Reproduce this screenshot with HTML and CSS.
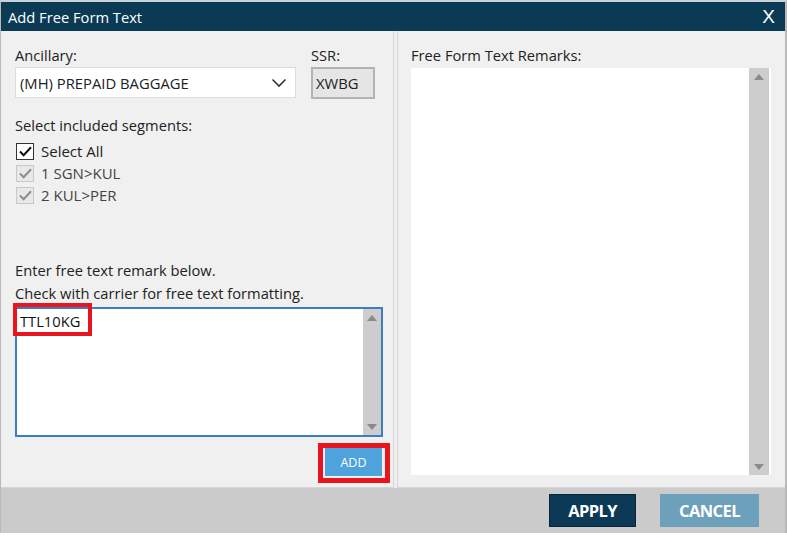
FILE: index.html
```html
<!DOCTYPE html>
<html lang="en">

<head>
  <meta charset="UTF-8">
  <meta name="viewport" content="width=device-width, initial-scale=1.0">
  <title>Add Free Form Text</title>
  <link rel="stylesheet" href="styles.css">
</head>

<body>
  <div id="dialog">
    <div class="titlebar">
      <span class="title">Add Free Form Text</span>
      <span class="close">X</span>
    </div>

    <div class="content">
      <div class="panel left">
        <div class="top-row">
          <div class="field ancillary">
            <label>Ancillary:</label>
            <div class="select">
              <span>(MH) PREPAID BAGGAGE</span>
              <svg width="16" height="10" viewBox="0 0 16 10"><path d="M1.5 1.5 L8 8 L14.5 1.5" fill="none" stroke="#333" stroke-width="1.6"/></svg>
            </div>
          </div>
          <div class="field ssr">
            <label>SSR:</label>
            <div class="ssr-box">XWBG</div>
          </div>
        </div>

        <p class="segments-title">Select included segments:</p>
        <ul class="segments">
          <li><span class="check"><svg width="13" height="11" viewBox="0 0 13 11"><path d="M1 5.5 L4.6 9.2 L12 1.2" fill="none" stroke="#111" stroke-width="2"/></svg></span>Select All</li>
          <li class="disabled"><span class="check"><svg width="13" height="11" viewBox="0 0 13 11"><path d="M1 5.5 L4.6 9.2 L12 1.2" fill="none" stroke="#8c8c8c" stroke-width="2"/></svg></span>1 SGN&gt;KUL</li>
          <li class="disabled"><span class="check"><svg width="13" height="11" viewBox="0 0 13 11"><path d="M1 5.5 L4.6 9.2 L12 1.2" fill="none" stroke="#8c8c8c" stroke-width="2"/></svg></span>2 KUL&gt;PER</li>
        </ul>

        <p class="hint">Enter free text remark below.</p>
        <p class="hint">Check with carrier for free text formatting.</p>

        <div class="remark-box">
          <div class="remark-text">TTL10KG</div>
          <div class="scrollbar">
            <span class="arrow up"></span>
            <span class="arrow down"></span>
          </div>
          <span class="mark mark-text"></span>
        </div>

        <div class="add-row">
          <div class="add-wrap">
            <button class="add">ADD</button>
          </div>
        </div>
      </div>

      <div class="panel right">
        <label>Free Form Text Remarks:</label>
        <div class="remarks-list">
          <div class="list-body"></div>
          <div class="scrollbar wide">
            <span class="arrow up"></span>
            <span class="arrow down"></span>
          </div>
        </div>
      </div>
    </div>

    <div class="footer">
      <button class="btn apply">APPLY</button>
      <button class="btn cancel">CANCEL</button>
    </div>
  </div>
  <div class="underlay"></div>
</body>

</html>
```

FILE: styles.css
```css
* {
  margin: 0;
  padding: 0;
  box-sizing: border-box;
}

body {
  background: #fff;
  font-family: "Open Sans", "Noto Sans", sans-serif;
  font-size: 14.7px;
  color: #222;
}

#dialog {
  width: 787px;
  height: 533px;
  display: flex;
  flex-direction: column;
  border-top: 2px solid #c9d2d8;
  border-left: 1px solid #b9b9b9;
  border-right: 2px solid #b9b9b9;
  background: #cbcbcb;
}

.titlebar {
  height: 29px;
  flex: none;
  background: #0b3a55;
  color: #fff;
  display: flex;
  align-items: center;
  justify-content: space-between;
  padding: 0 10px 0 7px;
}

.title {
  font-size: 14.7px;
}

.close {
  font-family: "Liberation Sans", sans-serif;
  font-size: 19px;
}

.content {
  height: 457px;
  flex: none;
  display: flex;
  gap: 3px;
  background: #f0f0f0;
}

.panel {
  background: #f0f0f0;
  border-bottom: 1px solid #d6d6d6;
}

.left {
  width: 393px;
  border-right: 1px solid #d6d6d6;
  padding: 15px 0 0 14px;
}

.right {
  flex: 1;
  border-left: 1px solid #d6d6d6;
  padding: 15px 11px 0 13px;
}

label {
  display: block;
  line-height: 18px;
  margin-bottom: 3px;
}

.right label {
  margin-bottom: 4px;
}

.top-row {
  display: flex;
  gap: 15px;
}

.select {
  width: 281px;
  height: 31px;
  background: #fff;
  border: 1px solid #dcdcdc;
  display: flex;
  align-items: center;
  justify-content: space-between;
  padding: 0 8px 0 4px;
  font-size: 14.8px;
}

.ssr-box {
  width: 64px;
  height: 32px;
  background: #e5e5e5;
  border: 2px solid #b3b3b3;
  display: flex;
  align-items: center;
  padding-left: 3px;
  font-size: 14.8px;
}

.segments-title {
  margin-top: 17px;
  line-height: 19px;
}

.segments {
  list-style: none;
  margin-top: 5px;
}

.segments li {
  height: 22px;
  display: flex;
  align-items: center;
  font-size: 15px;
}

.check {
  width: 18px;
  height: 17px;
  border: 1.5px solid #333;
  background: #fff;
  display: flex;
  align-items: center;
  justify-content: center;
  margin: 0 7px 0 1px;
}

.disabled {
  color: #444;
}

.disabled .check {
  border-color: #c8c8c8;
  background: #e8e8e8;
}

.hint {
  line-height: 23px;
}

.segments + .hint {
  margin-top: 53px;
}

.remark-box {
  position: relative;
  width: 368px;
  height: 130px;
  margin-top: 2px;
  border: 2px solid #3b7fc2;
  background: #fff;
  display: flex;
}

.remark-text {
  flex: 1;
  padding: 2px 0 0 3px;
  font-size: 14.7px;
  line-height: 20px;
  color: #111;
}

.scrollbar {
  width: 18px;
  background: #cdcdcd;
  position: relative;
}

.scrollbar.wide {
  width: 20px;
  margin: 0 2px 0 0;
}

.arrow {
  position: absolute;
  left: 50%;
  margin-left: -5px;
  width: 0;
  height: 0;
  border-left: 5px solid transparent;
  border-right: 5px solid transparent;
}

.arrow.up {
  top: 6px;
  border-bottom: 6px solid #8a8a8a;
}

.arrow.down {
  bottom: 5px;
  border-top: 6px solid #8a8a8a;
}

.mark {
  position: absolute;
  border: 4px solid #e8141e;
}

.mark-text {
  left: -4px;
  top: -6px;
  width: 79px;
  height: 33px;
}

.add-row {
  display: flex;
  justify-content: flex-end;
  width: 375px;
  margin-top: 6px;
}

.add-wrap {
  border: 5px solid #e8141e;
  padding: 0 3px 2px 2px;
  background: #f0f0f0;
}

.add {
  display: block;
  width: 57px;
  height: 28px;
  border: none;
  background: #4ea3dc;
  color: #fff;
  font-family: "Open Sans", sans-serif;
  font-size: 12.5px;
}

.remarks-list {
  width: 360px;
  height: 407px;
  background: #fff;
  display: flex;
}

.list-body {
  flex: 1;
}

.footer {
  height: 45px;
  flex: none;
  display: flex;
  justify-content: flex-end;
  align-items: center;
  gap: 24px;
  padding: 0 26px 0 0;
  background: #cbcbcb;
}

.btn {
  height: 33px;
  border: none;
  color: #fff;
  font-family: "Open Sans", sans-serif;
  font-weight: bold;
  font-size: 16.5px;
  letter-spacing: -0.6px;
}

.apply {
  width: 87px;
  background: #0c3a56;
  border: 1px solid #06263a;
}

.cancel {
  width: 99px;
  background: #6ca0bb;
}

.underlay {
  height: 4px;
  background: #fff;
}
```
